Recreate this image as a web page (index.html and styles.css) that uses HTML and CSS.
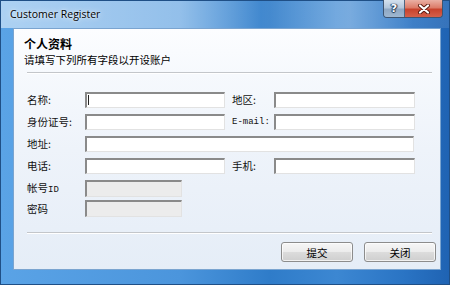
FILE: index.html
```html
<!DOCTYPE html>
<html lang="zh-CN">
<head>
    <meta charset="UTF-8">
    <title>Customer Register</title>
    <link rel="stylesheet" href="styles.css">
</head>
<body>
    <div class="window">
        <div class="titlebar">
            <span class="title">Customer Register</span>
            <div class="caption-buttons">
                <span class="cap-btn help">?</span>
                <span class="cap-btn close">
                    <svg width="14" height="10" viewBox="0 0 14 10">
                        <path d="M3 1.5 L11 8.5 M11 1.5 L3 8.5" stroke="#5a1a10" stroke-width="4" stroke-linecap="round"/>
                        <path d="M3 1.5 L11 8.5 M11 1.5 L3 8.5" stroke="#fff" stroke-width="2.2" stroke-linecap="round"/>
                    </svg>
                </span>
            </div>
        </div>

        <div class="client">
            <div class="intro">
                <h1>个人资料</h1>
                <p>请填写下列所有字段以开设账户</p>
            </div>
            <div class="sep"></div>

            <form class="form">
                <label>名称:</label>
                <div class="field"><span class="caret"></span></div>
                <label class="right">地区:</label>
                <div class="field"></div>

                <label>身份证号:</label>
                <div class="field"></div>
                <label class="right latin">E-mail:</label>
                <div class="field"></div>

                <label>地址:</label>
                <div class="field wide"></div>

                <label>电话:</label>
                <div class="field"></div>
                <label class="right">手机:</label>
                <div class="field"></div>
            </form>

            <div class="account">
                <label>帐号<span class="latin">ID</span></label>
                <div class="field disabled"></div>
                <label>密码</label>
                <div class="field disabled"></div>
            </div>

            <div class="sep bottom"></div>

            <div class="actions">
                <button type="button">提交</button>
                <button type="button">关闭</button>
            </div>
        </div>
    </div>
</body>
</html>
```

FILE: styles.css
```css
body {
    margin: 0;
    padding: 0;
    font-family: "Noto Sans CJK SC", sans-serif;
    color: #111;
}
.window {
    box-sizing: border-box;
    width: 450px;
    height: 285px;
    display: flex;
    flex-direction: column;
    border: 1px solid #1f4f86;
    background-color: #3f8bd6;
    background-image: linear-gradient(90deg, #5aa3e6 0%, #4b95dc 40%, #2f7cc9 60%, #3c87d2 75%, #2a74c4 90%, #1f63b3 100%);
}
.titlebar {
    height: 27px;
    display: flex;
    align-items: flex-start;
    justify-content: space-between;
    background-image: linear-gradient(90deg, rgba(255,255,255,0.5) 0%, rgba(255,255,255,0.4) 40%, rgba(255,255,255,0.08) 58%, rgba(255,255,255,0.32) 78%, rgba(255,255,255,0.1) 92%);
}
.title {
    margin: 5px 0 0 9px;
    font-family: "Open Sans", "Noto Sans", sans-serif;
    font-size: 10.5px;
    line-height: 16px;
    color: #000;
    text-shadow: 0 0 6px rgba(255,255,255,0.9), 0 0 2px rgba(255,255,255,0.8);
}
.caption-buttons {
    display: flex;
    margin: -1px 6px 0 0;
    border: 1px solid #3e5470;
    border-top: none;
    border-radius: 0 0 4px 4px;
    overflow: hidden;
    height: 17px;
}
.cap-btn {
    display: flex;
    align-items: center;
    justify-content: center;
    height: 17px;
}
.help {
    width: 20px;
    border-right: 1px solid #4e6580;
    background: linear-gradient(180deg, #d4e1ee 0%, #b3c7dc 45%, #8fa8c4 55%, #9fb7d0 100%);
    color: #fff;
    font-family: "DejaVu Sans", sans-serif;
    font-weight: bold;
    font-size: 11px;
    text-shadow: 0 0 1px #1e3550, 1px 0 1px #1e3550, -1px 0 1px #1e3550, 0 1px 1px #1e3550;
}
.close {
    width: 37px;
    background: linear-gradient(180deg, #eab0a4 0%, #dc7c69 45%, #c8432d 55%, #d5604a 100%);
}
.client {
    flex: 1;
    margin: 0 8px 14px 12px;
    border: 1px solid #7aa4d0;
    background: linear-gradient(180deg, #fcfdff 0, #f6f9fd 45px, #eef3fa 120px, #e5edf7 100%);
    display: flex;
    flex-direction: column;
}
.intro {
    padding: 7px 0 0 10px;
}
.intro h1 {
    margin: 0;
    font-size: 12px;
    line-height: 16px;
    font-weight: bold;
    color: #000;
}
.intro p {
    margin: 0;
    font-size: 10.5px;
    line-height: 16px;
    color: #000;
}
.sep {
    margin: 4px 8px 0 13px;
    height: 1px;
    border-bottom: 1px solid #fff;
    background: #c3c6ca;
}
.sep.bottom {
    margin-top: 15px;
}
.form {
    margin: 18px 0 0 13px;
    display: grid;
    grid-template-columns: 58px 140px 42px 141px;
    column-gap: 0;
    grid-auto-rows: 16px;
    row-gap: 6px;
    align-items: center;
}
label {
    font-size: 10.5px;
    line-height: 16px;
    color: #111;
}
.right {
    margin-left: 7px;
    white-space: nowrap;
}
.latin {
    font-family: "Liberation Mono", monospace;
    font-size: 9px;
}
.field {
    box-sizing: border-box;
    height: 16px;
    background: #fff;
    border-top: 2px solid #8a8a8a;
    border-left: 2px solid #8a8a8a;
    border-right: 1px solid #e2e2e2;
    border-bottom: 1px solid #e2e2e2;
    position: relative;
}
.form .right + .field {
    margin-left: 7px;
    width: 141px;
}
.field.wide {
    grid-column: 2 / 5;
    width: 329px;
}
.caret {
    position: absolute;
    left: 1px;
    top: 1px;
    width: 1px;
    height: 10px;
    background: #222;
}
.account {
    margin: 6px 0 0 13px;
    display: grid;
    grid-template-columns: 58px 97px;
    grid-auto-rows: 17px;
    row-gap: 3px;
    align-items: center;
}
.field.disabled {
    height: 17px;
    background: #ececec;
}
.actions {
    margin-top: 8px;
    padding-right: 4px;
    display: flex;
    justify-content: flex-end;
    gap: 11px;
}
.actions button {
    width: 72px;
    height: 20px;
    padding: 0;
    border: 1px solid #8c8c8c;
    border-radius: 3px;
    background: linear-gradient(180deg, #f6f6f6 0%, #ececec 48%, #dcdcdc 52%, #cfcfcf 100%);
    box-shadow: inset 0 0 0 1px rgba(255,255,255,0.7);
    font-family: "Noto Sans CJK SC", sans-serif;
    font-size: 10.5px;
    color: #000;
}
```
